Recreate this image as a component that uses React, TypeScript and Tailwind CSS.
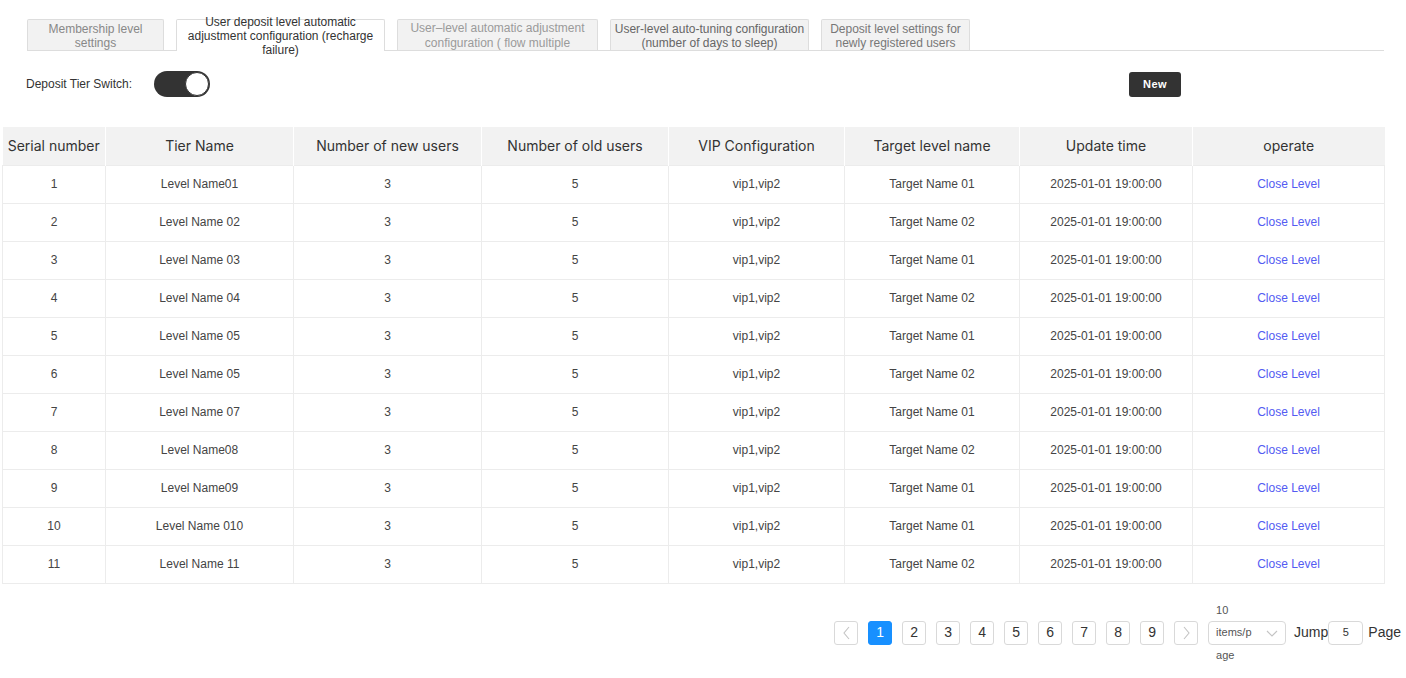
import React from 'react';

const tabs = [
  { lines: ['Membership level', 'settings'], width: 'w-[137px]', tone: 'text-[#888]', active: false, clip: false },
  { lines: ['User deposit level automatic', 'adjustment configuration (recharge', 'failure)'], width: 'w-[209px]', tone: 'text-[#333]', active: true, clip: false },
  { lines: ['User–level automatic adjustment', 'configuration ( flow multiple'], width: 'w-[201px]', tone: 'text-[#9a9a9a]', active: false, clip: true },
  { lines: ['User-level auto-tuning configuration', '(number of days to sleep)'], width: 'w-[199px]', tone: 'text-[#666]', active: false, clip: false },
  { lines: ['Deposit level settings for', 'newly registered users'], width: 'w-[149px]', tone: 'text-[#777]', active: false, clip: false },
];

const columns = [
  { title: 'Serial number', width: 'w-[103px]' },
  { title: 'Tier Name', width: 'w-[188px]' },
  { title: 'Number of new users', width: 'w-[188px]' },
  { title: 'Number of old users', width: 'w-[187px]' },
  { title: 'VIP Configuration', width: 'w-[176px]' },
  { title: 'Target level name', width: 'w-[175px]' },
  { title: 'Update time', width: 'w-[173px]' },
  { title: 'operate', width: 'w-[192px]' },
];

const rows = [
  { id: 1, name: 'Level Name01', target: 'Target Name 01' },
  { id: 2, name: 'Level Name 02', target: 'Target Name 02' },
  { id: 3, name: 'Level Name 03', target: 'Target Name 01' },
  { id: 4, name: 'Level Name 04', target: 'Target Name 02' },
  { id: 5, name: 'Level Name 05', target: 'Target Name 01' },
  { id: 6, name: 'Level Name 05', target: 'Target Name 02' },
  { id: 7, name: 'Level Name 07', target: 'Target Name 01' },
  { id: 8, name: 'Level Name08', target: 'Target Name 02' },
  { id: 9, name: 'Level Name09', target: 'Target Name 01' },
  { id: 10, name: 'Level Name 010', target: 'Target Name 01' },
  { id: 11, name: 'Level Name 11', target: 'Target Name 02' },
];

const Chevron = ({ dir }: { dir: 'left' | 'right' | 'down' }) => {
  const d = dir === 'left' ? 'M9 2 L4 8 L9 14' : dir === 'right' ? 'M4 2 L9 8 L4 14' : 'M2 5 L7 10 L12 5';
  const size = dir === 'down' ? { w: 14, h: 14 } : { w: 13, h: 16 };
  return (
    <svg width={size.w} height={size.h} viewBox={`0 0 ${size.w} ${size.h}`} fill="none">
      <path d={d} stroke="#c4c4c4" strokeWidth="1.1" />
    </svg>
  );
};

const App: React.FC = () => {
  return (
    <div className="w-[1406px] h-[678px] bg-white font-['Liberation_Sans',Arial,sans-serif] text-[#333] overflow-hidden">
      {/* Tabs */}
      <div className="pt-5 pl-[27px]">
        <div className="flex items-end gap-3 w-[1357px] h-[31px] border-b border-[#ddd]">
          {tabs.map(tab => (
            <div
              key={tab.lines[0]}
              className={`${tab.width} ${tab.tone} shrink-0 flex justify-center border border-b-0 border-[#ddd] rounded-t-[2px] text-[12px] leading-[14px] text-center whitespace-nowrap ${
                tab.active
                  ? 'h-[32px] -mb-px bg-white items-center'
                  : tab.clip
                    ? 'h-[31px] bg-[#f2f2f2] items-start pt-[1px] overflow-hidden leading-[15px] text-[12.5px]'
                    : 'h-[31px] bg-[#f2f2f2] items-center pt-[2px]'
              }`}
            >
              <span className="flex flex-col items-center">
                {tab.lines.map(line => (
                  <span key={line}>{line}</span>
                ))}
              </span>
            </div>
          ))}
        </div>
      </div>

      {/* Switch row */}
      <div className="flex items-center w-[1181px] pl-[26px] mt-5 h-[26px]">
        <span className="text-[12px]">Deposit Tier Switch:</span>
        <button className="ml-[22px] w-[56px] h-[26px] rounded-full bg-[#333] flex items-center justify-end pr-[1px]">
          <span className="w-[24px] h-[24px] rounded-full bg-white border border-[#333]" />
        </button>
        <button className="ml-auto w-[52px] h-[25px] rounded-[3px] bg-[#333] text-white text-[11px] font-bold tracking-[0.5px]">
          New
        </button>
      </div>

      {/* Table */}
      <div className="pl-[2px] mt-[30px]">
        <table className="table-fixed border-collapse w-[1382px]">
          <thead>
            <tr className="bg-[#f2f2f2] h-[38px]">
              {columns.map(col => (
                <th
                  key={col.title}
                  className={`${col.width} border-r border-white last:border-r-0 font-['Inter',sans-serif] font-normal text-[14px] text-[#333] text-center`}
                >
                  {col.title}
                </th>
              ))}
            </tr>
          </thead>
          <tbody>
            {rows.map(row => (
              <tr key={row.id} className="h-[38px] text-[12px] text-[#444]">
                <td className="border border-[#ececec] text-center">{row.id}</td>
                <td className="border border-[#ececec] text-center">{row.name}</td>
                <td className="border border-[#ececec] text-center">3</td>
                <td className="border border-[#ececec] text-center">5</td>
                <td className="border border-[#ececec] text-center">vip1,vip2</td>
                <td className="border border-[#ececec] text-center">{row.target}</td>
                <td className="border border-[#ececec] text-center">2025-01-01 19:00:00</td>
                <td className="border border-[#ececec] text-center text-[#535bf2]">Close Level</td>
              </tr>
            ))}
          </tbody>
        </table>
      </div>

      {/* Pagination */}
      <div className="flex items-center justify-end gap-[10px] pr-[5px] mt-[37px] h-[24px] text-[14px]">
        <button className="w-[24px] h-[24px] border border-[#d9d9d9] rounded-[3px] flex items-center justify-center">
          <Chevron dir="left" />
        </button>
        {[1, 2, 3, 4, 5, 6, 7, 8, 9].map(n => (
          <button
            key={n}
            className={`w-[24px] h-[24px] rounded-[3px] flex items-center justify-center ${
              n === 1 ? 'bg-[#1890ff] text-white border border-[#1890ff]' : 'border border-[#d9d9d9] text-[#333]'
            }`}
          >
            {n}
          </button>
        ))}
        <button className="w-[24px] h-[24px] border border-[#d9d9d9] rounded-[3px] flex items-center justify-center">
          <Chevron dir="right" />
        </button>
        <div className="w-[78px] h-[24px] border border-[#d9d9d9] rounded-[4px] flex items-center justify-between pl-[7px] pr-[6px]">
          <span className="flex flex-col text-[11px] leading-[22.5px] text-[#555]">
            <span>10</span>
            <span>items/p</span>
            <span>age</span>
          </span>
          <Chevron dir="down" />
        </div>
        <div className="flex items-center -ml-[2px]">
          <span className="text-[#333]">Jump</span>
          <span className="w-[35px] h-[24px] border border-[#d9d9d9] rounded-[4px] flex items-center justify-center text-[11px] text-[#333]">
            5
          </span>
          <span className="ml-[5px] text-[#333]">Page</span>
        </div>
      </div>
    </div>
  );
};

export default App;
